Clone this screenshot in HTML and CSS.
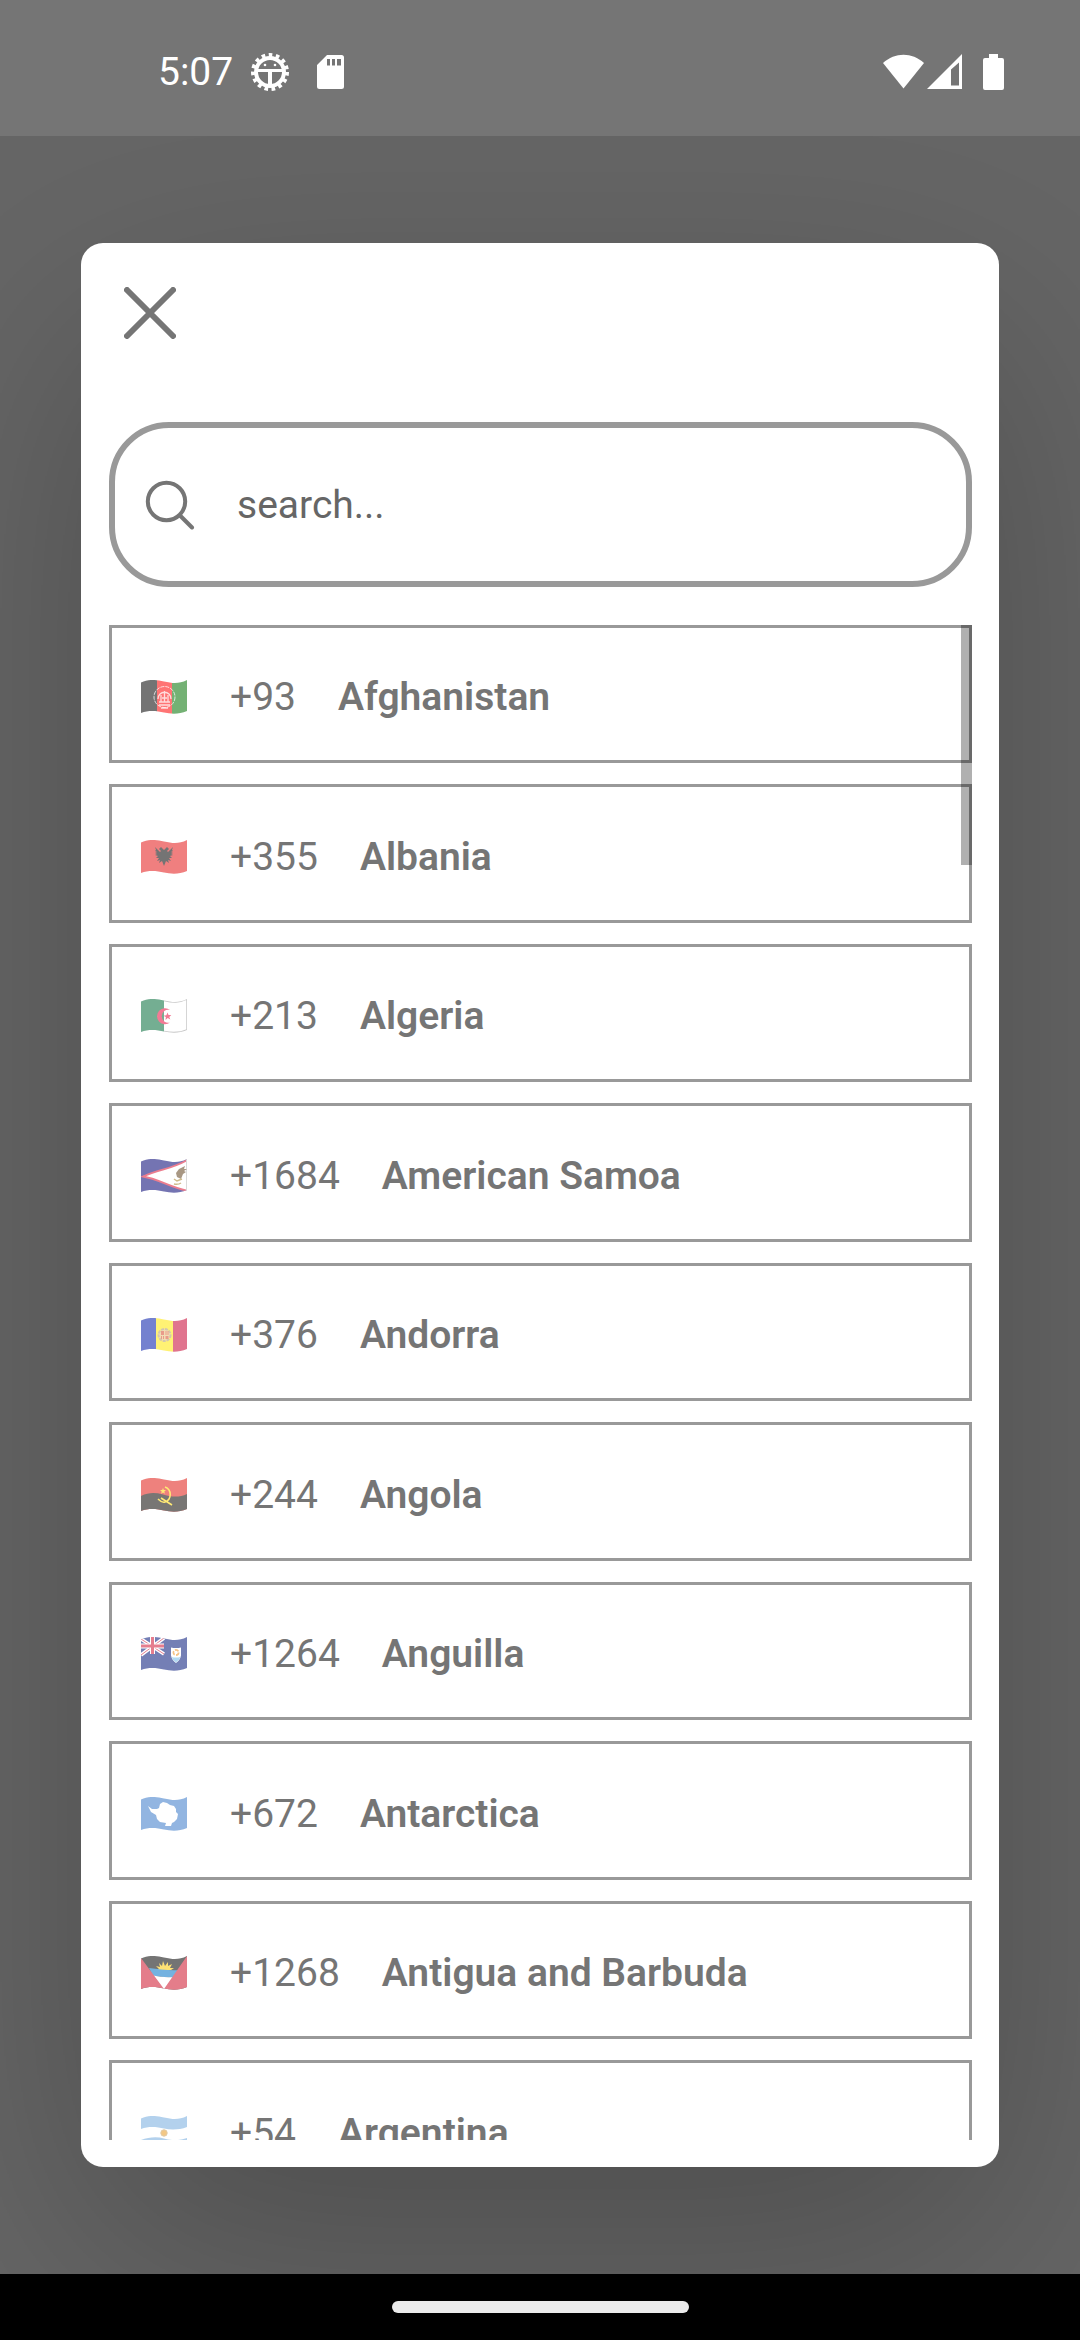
FILE: index.html
```html
<!DOCTYPE html>
<html lang="en">
<head>
<meta charset="utf-8">
<meta name="viewport" content="width=device-width, initial-scale=1">
<title>Select country</title>
<link rel="stylesheet" href="styles.css">
</head>
<body>
<svg class="defs" aria-hidden="true">
  <clipPath id="wave"><path d="M0 2.5C8-1 14-.5 23 1.5S38 4 46 0V31C38 34.5 30 34 23 32.5S8 30 0 33Z"/></clipPath>
</svg>

<header class="status">
  <div class="status-group">
    <span class="clock">5:07</span>
    <svg class="icon-debug" viewBox="0 0 40 40" aria-hidden="true">
      <circle cx="20" cy="20" r="14" fill="none" stroke="#fff" stroke-width="4"/>
      <circle cx="20" cy="20" r="17" fill="none" stroke="#fff" stroke-width="4" stroke-dasharray="3.6 3.52"/>
      <path d="M7 17h26v3H22v13h-4V20H7z" fill="#fff"/>
      <circle cx="15" cy="13" r="1.3" fill="#fff"/><circle cx="25" cy="13" r="1.3" fill="#fff"/>
    </svg>
    <svg class="icon-card" viewBox="0 0 27 34" aria-hidden="true">
      <path fill="#fff" fill-rule="evenodd" d="M10 0h14.500a2.500 2.500 0 0 1 2.500 2.500v29a2.500 2.500 0 0 1-2.500 2.500h-22a2.500 2.500 0 0 1-2.500-2.500V10zM10 4v6.500h3V4zM15 4v6.500h3V4zM20 4v6.500h4V4z"/>
    </svg>
  </div>
  <div class="status-group status-end">
    <svg class="icon-signal" viewBox="0 0 80 36" aria-hidden="true">
      <path fill="#fff" d="M0 9C12-2 29-2 41 9L20.500 34.500z"/>
      <path fill="#fff" fill-rule="evenodd" d="M44 35L79 0v35zM68 15.500V31.500h8V8.500z"/>
    </svg>
    <svg class="icon-battery" viewBox="0 0 21 36" aria-hidden="true">
      <path fill="#fff" d="M6 0h9v4h4a2 2 0 0 1 2 2v28a2 2 0 0 1-2 2H2a2 2 0 0 1-2-2V6a2 2 0 0 1 2-2h4z"/>
    </svg>
  </div>
</header>

<main class="backdrop">
  <section class="dialog" role="dialog" aria-label="Select country">
    <button class="close" type="button" aria-label="Close">
      <svg viewBox="0 0 52 52" aria-hidden="true"><path d="M3 3l46 46M49 3L3 49" fill="none" stroke="#757575" stroke-width="6" stroke-linecap="round"/></svg>
    </button>

    <label class="search">
      <svg viewBox="0 0 50 50" aria-hidden="true"><g fill="none" stroke="#757575" stroke-width="4" stroke-linecap="round"><circle cx="21.500" cy="21.500" r="18.700"/><path d="M35 35.500L47 47.500"/></g></svg>
      <input type="search" placeholder="search..." aria-label="Search country">
    </label>

    <div class="results">
      <ul class="countries">
        <li><button class="country" type="button">
          <svg class="flag" viewBox="0 0 46 34" aria-hidden="true"><g clip-path="url(#wave)"><path fill="#000" d="M0 0h16v34H0z"/><path fill="red" d="M16 0h15v34H16z"/><path fill="#007100" d="M31 0h15v34H31z"/><g fill="none" stroke="#fff" stroke-opacity=".75"><circle cx="23.500" cy="17" r="10.500" stroke-dasharray="4 1"/><path d="M17 19c0-9 13-9 13 0M18 22h11M18 25h11M20 28h7M20 15v7M23.500 11v11M27 15v7M21 18h5" stroke-width="1.300"/></g></g></svg>
          <span class="code">+93</span><span class="name">Afghanistan</span></button></li>
        <li><button class="country" type="button">
          <svg class="flag" viewBox="0 0 46 34" aria-hidden="true"><g clip-path="url(#wave)"><path fill="#e41414" d="M0 0h46v34H0z"/><path fill="#000" d="M23 10l-3-3-2 2 2 2-1 1-5-5 1 3-1 1 2 1-2 1 2 1-2 1 3 1-2 2 3 0-2 3 3-1-1 3 3-2 2 5 2-5 3 2-1-3 3 1-2-3 3 0-2-2 3-1-2-1 2-1-2-1 2-1-1-1 1-3-5 5-1-1 2-2-2-2z"/></g></svg>
          <span class="code">+355</span><span class="name">Albania</span></button></li>
        <li><button class="country" type="button">
          <svg class="flag" viewBox="0 0 46 34" aria-hidden="true"><g clip-path="url(#wave)"><path fill="#006a38" d="M0 0h23v34H0z"/><path fill="#fff" d="M23 0h23v34H23z"/><path d="M23 1.500C32 3.500 38 4 46 0V31C38 34.500 30 34 23 32.500" fill="none" stroke="#999" stroke-width="1.500"/><path fill="#e80c3c" d="M29 11a8 8 0 1 0 0 12.500a6.500 6.500 0 1 1 0-12.500zM26.500 13.500l1 2.600 2.800-.2-2 2 1 2.600-2.600-1.400-2.200 1.800.4-2.800-2.400-1.300 2.900-.5z"/></g></svg>
          <span class="code">+213</span><span class="name">Algeria</span></button></li>
        <li><button class="country" type="button">
          <svg class="flag" viewBox="0 0 46 34" aria-hidden="true"><g clip-path="url(#wave)"><path fill="#000073" d="M0 0h46v34H0z"/><path fill="#fff" stroke="#dc1030" stroke-width="1.800" d="M48 0C34 9 20 10 2 17.500C18 20 30 29 48 32z"/><path d="M45.500 0v32" stroke="#bbb"/><path fill="#60401c" d="M44 7l-6 3-3 4 1 4 4 2 2-5 3-2-2-1 3-2h-3z"/><path fill="none" stroke="#a8842c" stroke-width="1.500" d="M33 20l3 2 5-2M33 25q4 1 7-1"/></g></svg>
          <span class="code">+1684</span><span class="name">American Samoa</span></button></li>
        <li><button class="country" type="button">
          <svg class="flag" viewBox="0 0 46 34" aria-hidden="true"><g clip-path="url(#wave)"><path fill="#0018a8" d="M0 0h15v34H0z"/><path fill="#ffe800" d="M15 0h17v34H15z"/><path fill="#c60030" d="M32 0h14v34H32z"/><circle cx="23.500" cy="17" r="6" fill="#e8c078" stroke="#b09868" stroke-width="2" stroke-dasharray="3 1"/><path fill="#d84828" d="M20 13h3v4h-3zM24.500 13h1v4h-1zM26.500 13h1v4h-1zM20 18h1v3h-1zM22 18h1v3h-1zM24.500 18h3v3h-3z"/></g></svg>
          <span class="code">+376</span><span class="name">Andorra</span></button></li>
        <li><button class="country" type="button">
          <svg class="flag" viewBox="0 0 46 34" aria-hidden="true"><g clip-path="url(#wave)"><path fill="#e01810" d="M0 0h46v34H0z"/><path fill="#080400" d="M0 18C12 12 22 17 28 18S40 19 46 16V34H0z"/><path fill="none" stroke="#ffd800" stroke-width="1.600" d="M24 9a8 8 0 0 1 0 15q-3 1-7-3M20 20l11 7"/><path fill="#ffd800" d="M22 10l.8 2 2.200.1-1.700 1.400.6 2.200-1.900-1.200-1.900 1.200.6-2.200-1.700-1.400 2.200-.1z"/></g></svg>
          <span class="code">+244</span><span class="name">Angola</span></button></li>
        <li><button class="country" type="button">
          <svg class="flag" viewBox="0 0 46 34" aria-hidden="true"><g clip-path="url(#wave)"><path fill="#001478" d="M0 0h46v34H0z"/><path d="M0 2l23 15M23 1L0 18" stroke="#fff" stroke-width="3.500"/><path d="M0 2l23 15M23 1L0 18" stroke="#d01030"/><path d="M11.500 0v17M0 9h23" stroke="#fff" stroke-width="5"/><path d="M11.500 0v17M0 9h23" stroke="#d01030" stroke-width="3"/><path fill="#fff" d="M30 10.500q5 1 10 0v8q-1 5-5 7.500-4-2.500-5-7.500z"/><path fill="#70b8e8" d="M30.500 20q4.500 1 9 0-1 3-4.500 5.500-3.500-2.500-4.500-5.500z"/><circle cx="35" cy="15.500" r="2.600" fill="none" stroke="#f09020" stroke-width="1.700" stroke-dasharray="4 1.400"/></g></svg>
          <span class="code">+1264</span><span class="name">Anguilla</span></button></li>
        <li><button class="country" type="button">
          <svg class="flag" viewBox="0 0 46 34" aria-hidden="true"><g clip-path="url(#wave)"><path fill="#3878c8" d="M0 0h46v34H0z"/><path fill="#fff" d="M7 9l4 3h5l2-1 1-4 3-2 4 1 3 2 4 1 2 3 0 3 2 2-1 5-3 3-2 1-1 3-6 0 1-3-6-1-3-3-1-4-5-3-1-2z"/></g></svg>
          <span class="code">+672</span><span class="name">Antarctica</span></button></li>
        <li><button class="country" type="button">
          <svg class="flag" viewBox="0 0 46 34" aria-hidden="true"><g clip-path="url(#wave)"><path fill="#000" d="M0 0h46v34H0z"/><path fill="#ffc800" d="M14 14l4-1-3-3 4 1-1-4 3 3 1-5 2 5 3-4 0 4 4-2-2 4 4 0-3 2z"/><path fill="#0072c6" d="M8 12C18 13 28 15 40 14L33 22 12 20z"/><path fill="#fff" d="M12 19.500Q22 22 34 21L23 34z"/><path fill="#ce1028" d="M0 2l23 31v2H0zM46 0L23 33v2h23z"/></g></svg>
          <span class="code">+1268</span><span class="name">Antigua and Barbuda</span></button></li>
        <li><button class="country" type="button">
          <svg class="flag" viewBox="0 0 46 34" aria-hidden="true"><g clip-path="url(#wave)"><path fill="#74acdf" d="M0 0h46v34H0z"/><path fill="#fff" d="M0 13C8 10 16 11 23 12.500S38 14 46 11V22C38 25 30 24.500 23 22.500S8 21 0 24z"/><circle cx="23" cy="17" r="3.200" fill="#e89820" stroke="#c8a060"/></g></svg>
          <span class="code">+54</span><span class="name">Argentina</span></button></li>
      </ul>
      <div class="scroll-thumb"></div>
    </div>
  </section>
</main>

<footer class="navbar"><div class="handle"></div></footer>
</body>
</html>
```
FILE: styles.css
```css
* { box-sizing: border-box; }

body {
  margin: 0;
  height: 100vh;
  display: flex;
  flex-direction: column;
  font-family: Roboto, "Liberation Sans", sans-serif;
  font-size: 39px;
  line-height: 46px;
  color: #757575;
  background: #666;
}

button, input { font: inherit; color: inherit; }

svg { display: block; flex: none; }

.defs { position: absolute; width: 0; height: 0; }

.status {
  flex: none;
  height: 136px;
  padding: 8px 76px 0 158px;
  display: flex;
  align-items: center;
  justify-content: space-between;
  background: #757575;
  color: #fff;
}

.status-group { display: flex; align-items: center; gap: 17px; }
.status-end { gap: 20px; }
.icon-debug { width: 40px; height: 40px; }
.icon-card { width: 27px; height: 34px; margin-left: 10px; }
.icon-signal { width: 80px; height: 36px; }
.icon-battery { width: 21px; height: 36px; }

.backdrop {
  flex: 1;
  min-height: 0;
  display: flex;
  align-items: center;
  justify-content: center;
  overflow: hidden;
}

.dialog {
  width: 85%;
  height: 90%;
  padding: 44px 27px 27px 28px;
  display: flex;
  flex-direction: column;
  background: #fff;
  border-radius: 22px;
  box-shadow: 0 90px 280px rgba(0, 0, 0, .24);
}

.close {
  align-self: flex-start;
  margin: 0 0 83px 15px;
  padding: 0;
  border: 0;
  background: none;
}

.close svg { width: 52px; height: 52px; }

.search {
  flex: none;
  height: 165px;
  margin-bottom: 38px;
  padding: 2px 30px 0;
  display: flex;
  align-items: center;
  gap: 42px;
  border: 6px solid #999;
  border-radius: 60px;
}

.search svg { width: 50px; height: 50px; }

.search input {
  flex: 1;
  min-width: 0;
  padding: 0;
  border: 0;
  outline: 0;
  background: none;
  appearance: none;
}

.search input::placeholder { color: #666; opacity: 1; }

.results {
  flex: 1;
  min-height: 0;
  position: relative;
  overflow-y: auto;
  scrollbar-width: none;
}

.countries {
  height: 1574px;
  margin: 0;
  padding: 0;
  list-style: none;
  display: grid;
  grid-auto-rows: 1fr;
  row-gap: 21px;
}

.country {
  width: 100%;
  height: 100%;
  padding: 6px 29px 0;
  display: flex;
  align-items: center;
  border: 3px solid #999;
  background: none;
  text-align: left;
}

.flag { width: 46px; height: 34px; margin-right: 43px; opacity: .54; }
.code { margin-right: 42px; }
.name { font-weight: 600; }

.scroll-thumb {
  position: absolute;
  top: 0;
  right: 0;
  width: 11px;
  height: 240px;
  background: rgba(0, 0, 0, .31);
}

.navbar {
  flex: none;
  height: 66px;
  display: flex;
  align-items: center;
  justify-content: center;
  background: #000;
}

.handle { width: 297px; height: 12px; border-radius: 6px; background: #ebebeb; }
```
